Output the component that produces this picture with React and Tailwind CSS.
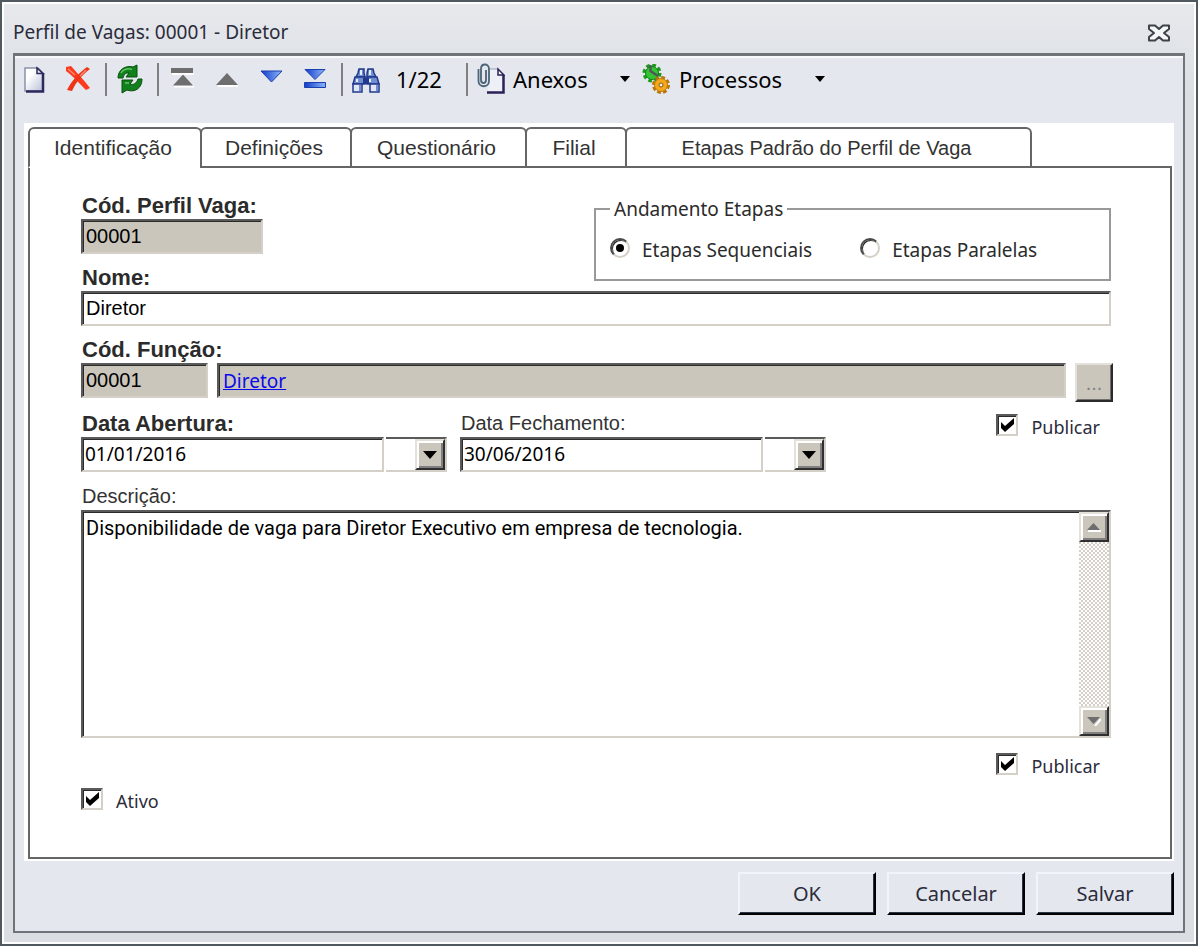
import React, { useState } from "react";

const tabs = [
  { id: "identificacao", label: "Identificação", style: "w-[174px] text-[21px]" },
  { id: "definicoes", label: "Definições", style: "w-[152px] text-[21px]" },
  { id: "questionario", label: "Questionário", style: "w-[177px] text-[21px]" },
  { id: "filial", label: "Filial", style: "w-[102px] text-[21px]" },
  { id: "etapas", label: "Etapas Padrão do Perfil de Vaga", style: "w-[407px] text-[20px]" },
];

const sunken =
  "border-2 border-t-[#5a5a5a] border-l-[#5a5a5a] border-r-[#d4d0c8] border-b-[#d4d0c8] shadow-[inset_1px_1px_0_#2b2b2b]";
const raised =
  "bg-[#cbc6bc] border-2 border-t-[#e4e1da] border-l-[#e4e1da] border-r-[#2f2f2f] border-b-[#2f2f2f] shadow-[inset_2px_2px_0_#fff,inset_-2px_-2px_0_#808080]";
const boldLabel = "block h-[25px] leading-[23px] pl-px text-[22px] font-bold text-[#2b2b2b]";
const label = "block h-[25px] leading-[23px] pl-px text-[20px] text-[#333]";

/* ---------- Icons ---------- */

const NewIcon = () => (
  <svg width="28" height="30" viewBox="0 0 28 30">
    <defs>
      <linearGradient id="paper" x1="0" y1="0" x2="1" y2="1">
        <stop offset="0.3" stopColor="#fff" />
        <stop offset="1" stopColor="#b9c0d8" />
      </linearGradient>
    </defs>
    <path d="M5 4H18L23 9V27H5Z" fill="url(#paper)" stroke="#8a91ab" strokeWidth="1.5" />
    <path d="M23 9V27.500H6" fill="none" stroke="#2c2a5c" strokeWidth="2.5" />
    <path d="M17 4V9.500H23Z" fill="#e8ebf5" stroke="#2c2a5c" strokeWidth="1.5" />
  </svg>
);

const DeleteIcon = () => (
  <svg width="28" height="30" viewBox="0 0 28 30">
    <path d="M2 3L7 2C12 8 20 16 26 24L22 26C16 20 9 12 2 7Z" fill="#fb3a1e" />
    <path d="M23 3L26 5C18 11 12 18 8 27L3 26C8 16 15 9 23 3Z" fill="#f03316" />
    <path d="M4 5L11 11M22 6L16 12" stroke="#ff8a70" strokeWidth="1.5" />
  </svg>
);

const RefreshIcon = () => (
  <svg width="28" height="30" viewBox="0 0 28 30">
    <path d="M2 14C2 6 9 1 17 3L21 1V13H10L13 9C10 8.500 8 10 7 14Z" fill="#12801c" stroke="#06500c" />
    <path d="M26 15C26 24 19 29 11 26L6 29V16H17L14 20C18 21.500 20.500 19 22 15Z" fill="#12801c" stroke="#06500c" />
    <path d="M5 9C7 5 12 4 16 5.500M9 19H13" fill="none" stroke="#5cc75f" strokeWidth="1.5" />
  </svg>
);

const FirstIcon = () => (
  <svg width="28" height="30" viewBox="0 0 28 30">
    <path d="M4 10H26M6 22.500H26" stroke="#fff" strokeWidth="2" />
    <path d="M3 4H25V9H3Z" fill="#6e6e6e" />
    <path d="M15 10.500L25 21.500H5Z" fill="#6e6e6e" />
  </svg>
);

const PrevIcon = () => (
  <svg width="28" height="30" viewBox="0 0 28 30">
    <path d="M6 22H26" stroke="#fff" strokeWidth="2" />
    <path d="M15 9L26 21H4Z" fill="#6e6e6e" />
  </svg>
);

const BlueGradient = ({ id }) => (
  <linearGradient id={id} x1="0" y1="0" x2="1" y2="0">
    <stop offset="0.1" stopColor="#1c47cf" />
    <stop offset="0.9" stopColor="#82abf5" />
  </linearGradient>
);

const NextIcon = () => (
  <svg width="28" height="30" viewBox="0 0 28 30">
    <defs>
      <BlueGradient id="nextFill" />
    </defs>
    <path d="M5 7H26L15.500 18Z" fill="url(#nextFill)" stroke="#1c3fb0" />
  </svg>
);

const LastIcon = () => (
  <svg width="28" height="30" viewBox="0 0 28 30">
    <defs>
      <BlueGradient id="lastFill" />
    </defs>
    <path d="M5 5.500H25L15 15.500Z" fill="url(#lastFill)" stroke="#1c3fb0" />
    <path d="M4.500 18.500H25.500V23.500H4.500Z" fill="url(#lastFill)" stroke="#1c3fb0" />
  </svg>
);

const FindIcon = () => (
  <svg width="28" height="30" viewBox="0 0 28 30">
    <g stroke="#22388c" strokeWidth="1.5" fill="#6f8fd0">
      <path d="M7 5H12V9L13 13H4L6 9Z" />
      <path d="M16 5H21L22 9L24 13H15V9Z" />
      <path d="M3 13H13V20H1Z" />
      <path d="M15 13H25L27 20H15Z" />
      <path d="M1 20H10V28H1Z" fill="#dfe6f6" />
      <path d="M18 20H27V28H18Z" fill="#dfe6f6" />
    </g>
    <path d="M11 14H17V20H11Z" fill="#22388c" />
    <path d="M5 15V18M18 15V18M9 6V11M18 6V11" stroke="#e6eefc" strokeWidth="2" />
    <path d="M8 21V27M25 21V27" stroke="#6f8fd0" strokeWidth="2" />
  </svg>
);

const ClipIcon = () => (
  <svg width="28" height="32" viewBox="0 0 28 32">
    <path d="M12 6H22L27 12V30H11Z" fill="#eef0f7" />
    <path d="M12 6H22" stroke="#9aa0b8" />
    <path d="M10 29.500H26.500V12" fill="none" stroke="#2c2058" strokeWidth="2.500" />
    <path d="M21 6V12H27Z" fill="#fff" stroke="#2c2058" strokeWidth="1.500" />
    <path
      d="M1.500 6V18C1.500 25 12 25 12 18V6C12 0 4 0 4 6V17C4 21 9 21 9 17V7"
      fill="none"
      stroke="#4b6478"
      strokeWidth="1.800"
    />
  </svg>
);

const GearsIcon = () => (
  <svg width="28" height="30" viewBox="0 0 28 30">
    <circle cx="10" cy="9" r="7.500" fill="none" stroke="#1c9a1c" strokeWidth="4" strokeDasharray="3.500 2.390" />
    <circle cx="10" cy="9" r="6.500" fill="#35c335" stroke="#178017" />
    <path d="M8.500 1V7L16 12" stroke="#4d5a55" strokeWidth="2.500" fill="none" />
    <circle cx="19" cy="21" r="7" fill="none" stroke="#b8750a" strokeWidth="4" strokeDasharray="3.500 2" />
    <circle cx="19" cy="21" r="6.500" fill="#f5a81c" stroke="#c07c0c" />
    <circle cx="19" cy="21" r="2" fill="#eceff5" stroke="#8a5a0c" />
  </svg>
);

const CloseIcon = () => (
  <svg width="22" height="18" viewBox="0 0 22 18">
    <path
      d="M1 1.500H7L11 5L15 1.500H21V5L16 9L21 13V16.500H15L11 13L7 16.500H1V13L6 9L1 5Z"
      fill="#f4f6f8"
      stroke="#3c4248"
      strokeWidth="2"
      strokeLinejoin="round"
    />
  </svg>
);

const Caret = () => (
  <svg width="10" height="6" viewBox="0 0 10 6">
    <path d="M0 0H10L5 6Z" fill="#000" />
  </svg>
);

/* ---------- Controls ---------- */

const Separator = () => <span className="ml-[13px] mr-[9px] h-[33px] w-[2px] bg-[#808080]" />;

const IconButton = ({ title, children }) => (
  <button type="button" aria-label={title} className="shrink-0">
    {children}
  </button>
);

const CheckField = ({ id, text }) => (
  <div className="flex items-start gap-[13px]">
    <span className="relative block size-[22px] shrink-0">
      <input
        id={id}
        type="checkbox"
        defaultChecked
        className={`peer block size-[22px] appearance-none bg-white ${sunken}`}
      />
      <svg
        className="pointer-events-none absolute inset-0 hidden peer-checked:block"
        width="22"
        height="22"
        viewBox="0 0 22 22"
      >
        <path d="M5 8L9 12L18 4V10L9 18L5 14Z" fill="#000" />
      </svg>
    </span>
    <label htmlFor={id} className="pt-[2px] font-['Noto_Sans',sans-serif] text-[18px] leading-[22px] text-[#2b2b3a]">
      {text}
    </label>
  </div>
);

const RadioField = ({ id, text, checked }) => (
  <div className="flex items-start gap-3">
    <span className="relative block size-[20px] shrink-0">
      <input
        id={id}
        type="radio"
        name="andamento"
        defaultChecked={checked}
        className="peer block size-[20px] appearance-none rounded-full border-2 border-t-[#4a4a4a] border-l-[#4a4a4a] border-r-[#d4d0c8] border-b-[#d4d0c8] bg-white shadow-[inset_1px_1px_0_#2b2b2b]"
      />
      <svg
        className="pointer-events-none absolute inset-0 hidden peer-checked:block"
        width="20"
        height="20"
        viewBox="0 0 20 20"
      >
        <circle cx="10" cy="10" r="4" fill="#000" />
      </svg>
    </span>
    <label htmlFor={id} className="font-['Noto_Sans',sans-serif] text-[19px] leading-[24px] text-[#2b2b2b]">
      {text}
    </label>
  </div>
);

const DateField = ({ id, text, value, labelStyle }) => (
  <div className="w-[366px]">
    <label htmlFor={id} className={labelStyle}>
      {text}
    </label>
    <div className="flex h-[35px] gap-[2px]">
      <input
        id={id}
        type="text"
        defaultValue={value}
        className={`w-[303px] bg-white px-[2px] font-['Noto_Sans',sans-serif] text-[19px] text-black ${sunken}`}
      />
      <div className="flex flex-1 justify-end border-2 border-l-0 border-t-[#5a5a5a] border-r-[#d4d0c8] border-b-[#d4d0c8] bg-white">
        <button type="button" aria-label="Abrir calendário" className={`flex w-[30px] items-center justify-center ${raised}`}>
          <svg width="14" height="8" viewBox="0 0 14 8">
            <path d="M0 0H14L7 8Z" fill="#000" />
          </svg>
        </button>
      </div>
    </div>
  </div>
);

const ScrollButton = ({ title, down }) => (
  <button type="button" aria-label={title} className={`flex h-[30px] items-center justify-center ${raised}`}>
    <svg width="14" height="9" viewBox="0 0 14 9">
      {down ? (
        <>
          <path d="M8 9L14 2" stroke="#fff" strokeWidth="2" />
          <path d="M0 0H13L6.500 7Z" fill="#6e6e6e" />
        </>
      ) : (
        <>
          <path d="M1 8H14" stroke="#fff" strokeWidth="2" />
          <path d="M6.500 0L13 7H0Z" fill="#6e6e6e" />
        </>
      )}
    </svg>
  </button>
);

const ActionButton = ({ children }) => (
  <button
    type="button"
    className="h-[43px] w-[138px] border-2 border-t-[#f1f4fa] border-l-[#f1f4fa] border-r-black border-b-black bg-[#e4e7ee] font-['Noto_Sans',sans-serif] text-[20px] text-[#2b2b3a] shadow-[inset_-1px_-1px_0_#2b3548]"
  >
    {children}
  </button>
);

/* ---------- Window ---------- */

const Toolbar = () => (
  <div className="flex h-[44px] items-center pl-[5px] font-['Noto_Sans',sans-serif] text-[22px] text-black">
    <div className="flex gap-4">
      <IconButton title="Novo"><NewIcon /></IconButton>
      <IconButton title="Excluir"><DeleteIcon /></IconButton>
    </div>
    <Separator />
    <IconButton title="Atualizar"><RefreshIcon /></IconButton>
    <Separator />
    <div className="flex gap-4">
      <IconButton title="Primeiro"><FirstIcon /></IconButton>
      <IconButton title="Anterior"><PrevIcon /></IconButton>
      <IconButton title="Próximo"><NextIcon /></IconButton>
      <IconButton title="Último"><LastIcon /></IconButton>
    </div>
    <Separator />
    <IconButton title="Localizar"><FindIcon /></IconButton>
    <span className="ml-4 w-[57px]">1/22</span>
    <Separator />
    <button type="button" className="flex w-[153px] items-center gap-2">
      <ClipIcon />
      <span className="flex-1 text-left">Anexos</span>
      <Caret />
    </button>
    <button type="button" className="ml-3 flex w-[183px] items-center gap-[9px]">
      <GearsIcon />
      <span className="flex-1 text-left">Processos</span>
      <Caret />
    </button>
  </div>
);

const IdentificacaoForm = () => (
  <form onSubmit={(e) => e.preventDefault()} className="pt-[26px] pr-[59px] pb-[45px] pl-[51px]">
    <div className="grid grid-cols-[1fr_517px]">
      <div>
        <label htmlFor="codPerfil" className={boldLabel}>Cód. Perfil Vaga:</label>
        <input
          id="codPerfil"
          type="text"
          readOnly
          defaultValue="00001"
          className={`block h-[35px] w-[182px] bg-[#cbc6bc] px-[3px] text-[20px] text-black ${sunken}`}
        />
        <label htmlFor="nome" className={`mt-3 ${boldLabel}`}>Nome:</label>
      </div>
      <fieldset className="mb-[10px] border-2 border-[#999] px-[14px]">
        <legend className="px-1 font-['Noto_Sans',sans-serif] text-[19px] leading-[30px] text-[#2b2b2b]">
          Andamento Etapas
        </legend>
        <div className="flex gap-12 pt-[14px]">
          <RadioField id="sequenciais" text="Etapas Sequenciais" checked />
          <RadioField id="paralelas" text="Etapas Paralelas" />
        </div>
      </fieldset>
    </div>
    <input
      id="nome"
      type="text"
      defaultValue="Diretor"
      className={`block h-[35px] w-full bg-white px-[3px] text-[20px] text-black ${sunken}`}
    />

    <label htmlFor="codFuncao" className={`mt-3 ${boldLabel}`}>Cód. Função:</label>
    <div className="-mr-[2px] flex">
      <input
        id="codFuncao"
        type="text"
        readOnly
        defaultValue="00001"
        className={`h-[35px] w-[127px] bg-[#cbc6bc] px-[3px] text-[20px] text-black ${sunken}`}
      />
      <div className={`ml-[9px] flex h-[35px] flex-1 items-center bg-[#cbc6bc] px-[4px] ${sunken}`}>
        <a href="#funcao" className="font-['Noto_Sans',sans-serif] text-[19px] leading-[24px] text-[#0b0bea] underline">
          Diretor
        </a>
      </div>
      <button
        type="button"
        className="-mb-1 ml-[9px] h-[39px] w-[38px] border-2 border-t-[#e4e1da] border-l-[#e4e1da] border-r-[#2b2b2b] border-b-[#2b2b2b] bg-[#cbc6bc] text-[20px] text-[#808080] shadow-[inset_-1px_-1px_0_#707070]"
      >
        ...
      </button>
    </div>

    <div className="mt-[14px] flex gap-[13px]">
      <DateField id="abertura" text="Data Abertura:" value="01/01/2016" labelStyle={boldLabel} />
      <DateField id="fechamento" text="Data Fechamento:" value="30/06/2016" labelStyle={label} />
      <div className="ml-auto pt-[2px] pr-[11px]">
        <CheckField id="publicarDatas" text="Publicar" />
      </div>
    </div>

    <label htmlFor="descricao" className={`mt-[13px] ${label}`}>Descrição:</label>
    <div className={`flex h-[228px] bg-white ${sunken}`}>
      <textarea
        id="descricao"
        defaultValue="Disponibilidade de vaga para Diretor Executivo em empresa de tecnologia."
        className="flex-1 resize-none overflow-hidden bg-transparent px-[3px] pt-[3px] font-['Roboto',sans-serif] text-[20px] leading-[26px] text-black outline-none"
      />
      <div className="flex w-[30px] flex-col bg-[repeating-conic-gradient(#d4d0c8_0%_25%,#fff_0%_50%)] bg-[length:4px_4px]">
        <ScrollButton title="Rolar para cima" />
        <span className="flex-1" />
        <ScrollButton title="Rolar para baixo" down />
      </div>
    </div>

    <div className="flex justify-end pt-[15px] pr-[11px]">
      <CheckField id="publicarDescricao" text="Publicar" />
    </div>
    <div className="pt-[11px]">
      <CheckField id="ativo" text="Ativo" />
    </div>
  </form>
);

const App = () => {
  const [activeTab, setActiveTab] = useState("identificacao");

  return (
    <div className="flex min-h-screen flex-col border-2 border-[#50595f] bg-[#dbdfe4] font-['Liberation_Sans',Arial,sans-serif]">
      <div className="flex flex-1 flex-col border-2 border-white bg-gradient-to-b from-[#e6e8ec] via-[#dbdfe4] via-10% to-[#dbdfe4] px-[9px] pb-[9px]">
        {/* Title bar */}
        <header className="flex h-[49px] items-center justify-between pt-[8px] pr-[15px]">
          <h1 className="font-['Noto_Sans',sans-serif] text-[19px] text-[#2b2b3a]">Perfil de Vagas: 00001 - Diretor</h1>
          <button type="button" aria-label="Fechar">
            <CloseIcon />
          </button>
        </header>

        <main className="flex-1 border-2 border-t-[3px] border-[#707378] bg-[#e4e7ee] px-[9px] pb-[14px] shadow-[inset_0_2px_0_#f8f9fb]">
          <div className="-mx-[9px] pt-px pb-[22px]">
            <Toolbar />
          </div>

          {/* Tabs */}
          <div className="bg-white pt-1 pr-[2px] pb-[2px] pl-1">
            <div role="tablist" className="relative -mb-[2px] flex">
              {tabs.map((tab) => (
                <button
                  key={tab.id}
                  type="button"
                  role="tab"
                  aria-selected={activeTab === tab.id}
                  onClick={() => setActiveTab(tab.id)}
                  className={`-mr-[2px] h-[41px] rounded-t-[6px] border-2 border-[#666] pr-1 text-[#333] ${tab.style} ${
                    activeTab === tab.id ? "border-b-white" : "border-b-[#666]"
                  }`}
                >
                  {tab.label}
                </button>
              ))}
            </div>
            <div className="border-2 border-[#666]">
              <IdentificacaoForm />
            </div>
          </div>

          {/* Footer buttons */}
          <footer className="flex justify-end gap-[11px] pt-[11px]">
            <ActionButton>OK</ActionButton>
            <ActionButton>Cancelar</ActionButton>
            <ActionButton>Salvar</ActionButton>
          </footer>
        </main>
      </div>
    </div>
  );
};

export default App;
